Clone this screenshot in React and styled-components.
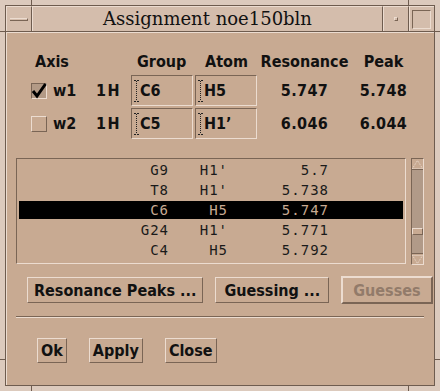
import React from "react";
import styled, { createGlobalStyle } from "styled-components";

const C = {
  frame: "#dccabd",
  line: "#6e5c4f",
  title: "#d4bdac",
  body: "#c8aa92",
  hi: "#ecdcd0",
  lo: "#7a6555",
  trough: "#b19a88",
  sunk: "#b39a86",
};

const Global = createGlobalStyle`
  html, body { margin: 0; padding: 0; background: ${C.frame}; }
  * { box-sizing: border-box; }
`;

const Window = styled.div`
  position: relative;
  width: 440px;
  height: 391px;
  padding: 5px;
  background: ${C.frame};
`;

const Tick = styled.span`
  position: absolute;
  background: ${C.line};
  width: ${(p) => (p.$h ? "5px" : "1px")};
  height: ${(p) => (p.$h ? "1px" : "5px")};
`;

const Inner = styled.div`
  height: 100%;
  border: 1px solid ${C.line};
  display: flex;
  flex-direction: column;
`;

const TitleBar = styled.div`
  display: flex;
  height: 26px;
  flex: none;
  border-bottom: 1px solid ${C.line};
  background: ${C.title};
`;

const TitleBtn = styled.div`
  width: ${(p) => (p.$last ? "25px" : "26px")};
  flex: none;
  border-top: 1px solid ${C.hi};
  border-left: 1px solid ${C.hi};
  border-right: ${(p) => (p.$last ? "none" : `1px solid ${C.line}`)};
  display: flex;
  align-items: center;
  justify-content: center;
`;

const TitleText = styled.div`
  flex: 1;
  border-top: 1px solid ${C.hi};
  border-left: 1px solid ${C.hi};
  border-right: 1px solid ${C.line};
  display: flex;
  align-items: center;
  justify-content: center;
  font: 18px/24px "DejaVu Serif", serif;
  color: #111;
`;

const MinBar = styled.div`
  width: 18px;
  height: 3px;
  border-top: 1px solid ${C.hi};
  border-bottom: 1px solid ${C.lo};
  border-right: 1px solid ${C.lo};
  margin-top: 1px;
`;

const Dot = styled.div`
  width: 4px;
  height: 4px;
  border-top: 1px solid ${C.hi};
  border-left: 1px solid ${C.hi};
  border-bottom: 1px solid ${C.lo};
  border-right: 1px solid ${C.lo};
`;

const MaxBox = styled.div`
  width: 19px;
  height: 19px;
  border-top: 1px solid ${C.lo};
  border-left: 1px solid ${C.lo};
  border-bottom: 1px solid ${C.hi};
  border-right: 1px solid ${C.hi};
  margin-left: -1px;
`;

const Body = styled.div`
  flex: 1;
  background: ${C.body};
  border-top: 1px solid ${C.hi};
  border-left: 1px solid ${C.hi};
  padding: 20px 9px 0 9px;
  display: flex;
  flex-direction: column;
  font-family: "DejaVu Sans Condensed", "DejaVu Sans", sans-serif;
  font-stretch: condensed;
  color: #111;
`;

const Grid = styled.div`
  display: grid;
  grid-template-columns: 22px 43px 35px 64px 62px 95px 63px;
  grid-template-rows: 20px 31px 31px;
  row-gap: 2px;
  margin-left: 15px;
  font-weight: bold;
  font-size: 16px;
  line-height: 20px;
  align-items: center;
`;

const Head = styled.div`
  grid-column: ${(p) => p.$span || "auto"};
  padding-left: ${(p) => p.$pad || 0}px;
  text-align: ${(p) => (p.$center ? "center" : "left")};
  margin-top: -1px;
  align-self: start;
`;

const Cell = styled.div`
  text-align: ${(p) => (p.$center ? "center" : "left")};
  letter-spacing: ${(p) => (p.$num ? "0.4px" : "0")};
  margin-top: 1px;
`;

const Check = styled.div`
  width: 16px;
  height: 16px;
  background: ${(p) => (p.$on ? C.sunk : C.body)};
  border-top: 1px solid ${(p) => (p.$on ? C.lo : C.hi)};
  border-left: 1px solid ${(p) => (p.$on ? C.lo : C.hi)};
  border-bottom: 1px solid ${(p) => (p.$on ? C.hi : C.lo)};
  border-right: 1px solid ${(p) => (p.$on ? C.hi : C.lo)};
  display: flex;
  align-items: center;
  justify-content: center;
  overflow: visible;
`;

const Entry = styled.div`
  width: 62px;
  height: 31px;
  border-top: 1px solid ${C.lo};
  border-left: 1px solid ${C.lo};
  border-bottom: 1px solid ${C.hi};
  border-right: 1px solid ${C.hi};
  display: flex;
  align-items: center;
  padding-left: 2px;
  gap: 1px;
`;

const ListArea = styled.div`
  display: flex;
  gap: 5px;
  margin-top: 19px;
`;

const ListBox = styled.div`
  width: 390px;
  height: 106px;
  border-top: 1px solid ${C.lo};
  border-left: 1px solid ${C.lo};
  border-bottom: 1px solid ${C.hi};
  border-right: 1px solid ${C.hi};
  padding: 2px;
`;

const ListRow = styled.div`
  display: grid;
  grid-template-columns: 150px 59px 101px 1fr;
  height: 18px;
  margin-bottom: 2px;
  background: ${(p) => (p.$sel ? "#000" : "transparent")};
  color: ${(p) => (p.$sel ? C.body : "#1a1a1a")};
  font: 14px/18px "DejaVu Sans Mono", monospace;
  letter-spacing: 1px;
  & > span {
    text-align: right;
  }
`;

const Scroll = styled.div`
  width: 13px;
  height: 107px;
  background: ${C.trough};
  border-top: 1px solid ${C.lo};
  border-left: 1px solid ${C.lo};
  border-bottom: 1px solid ${C.hi};
  border-right: 1px solid ${C.hi};
  display: flex;
  flex-direction: column;
`;

const Arrow = styled.div`
  height: 11px;
  flex: none;
  background: ${C.body};
  border-bottom: ${(p) => (p.$down ? "none" : `1px solid ${C.lo}`)};
  border-top: ${(p) => (p.$down ? `1px solid ${C.lo}` : "none")};
  display: flex;
  align-items: center;
  justify-content: center;
`;

const Thumb = styled.div`
  height: 7px;
  flex: none;
  margin-top: ${(p) => p.$top}px;
  background: ${C.body};
  border-top: 1px solid ${C.hi};
  border-left: 1px solid ${C.hi};
  border-bottom: 1px solid ${C.lo};
  border-right: 1px solid ${C.lo};
`;

const Spacer = styled.div`
  flex: 1;
`;

const ButtonRow = styled.div`
  display: flex;
  gap: ${(p) => p.$gap}px;
  margin-top: ${(p) => p.$top}px;
  padding-left: ${(p) => p.$left}px;
  align-items: center;
`;

const Button = styled.div`
  height: ${(p) => p.$h}px;
  padding: 0 ${(p) => p.$pad}px;
  display: flex;
  align-items: center;
  font-size: 16px;
  font-weight: bold;
  white-space: nowrap;
  color: ${(p) => (p.$disabled ? "#927b6a" : "#111")};
  border-top: ${(p) => p.$bw}px solid ${C.hi};
  border-left: ${(p) => p.$bw}px solid ${C.hi};
  border-bottom: ${(p) => p.$bw}px solid ${C.lo};
  border-right: ${(p) => p.$bw}px solid ${C.lo};
`;

const Separator = styled.div`
  margin-top: 12px;
  height: 2px;
  width: 408px;
  border-top: 1px solid ${C.lo};
  border-bottom: 1px solid ${C.hi};
`;

const IBeam = () => (
  <svg width="5" height="22" viewBox="0 0 5 22">
    <path d="M0 0.5h2M3 0.5h2M0 21.5h2M3 21.5h2" stroke="#222" strokeWidth="1" />
    <path d="M2.5 1v20" stroke="#222" strokeWidth="1" strokeDasharray="1 1" />
  </svg>
);

const Tri = ({ down }) => (
  <svg width="11" height="9" viewBox="0 0 11 9">
    <path
      d={down ? "M0.5 0.5h10L5.5 8.5z" : "M0.5 8.5h10L5.5 0.5z"}
      fill="none"
      stroke={C.hi}
      strokeWidth="1"
      strokeDasharray="1 1"
    />
  </svg>
);

const rows = [
  ["G9", "H1'", "5.7"],
  ["T8", "H1'", "5.738"],
  ["C6", "H5", "5.747"],
  ["G24", "H1'", "5.771"],
  ["C4", "H5", "5.792"],
];

const axes = [
  { on: true, w: "w1", g: "C6", a: "H5", r: "5.747", p: "5.748" },
  { on: false, w: "w2", g: "C5", a: "H1’", r: "6.046", p: "6.044" },
];

export default function App() {
  return (
    <Window>
      <Global />
      <Tick style={{ left: 31, top: 0 }} />
      <Tick style={{ left: 408, top: 0 }} />
      <Tick style={{ left: 31, bottom: 0 }} />
      <Tick style={{ left: 408, bottom: 0 }} />
      <Tick $h style={{ left: 0, top: 31 }} />
      <Tick $h style={{ right: 0, top: 31 }} />
      <Tick $h style={{ left: 0, top: 359 }} />
      <Tick $h style={{ right: 0, top: 359 }} />
      <Inner>
        <TitleBar>
          <TitleBtn>
            <MinBar />
          </TitleBtn>
          <TitleText>Assignment noe150bln</TitleText>
          <TitleBtn>
            <Dot />
          </TitleBtn>
          <TitleBtn $last>
            <MaxBox />
          </TitleBtn>
        </TitleBar>
        <Body>
          <Grid>
            <Head $span="span 2" $pad={4}>Axis</Head>
            <Head />
            <Head $pad={6}>Group</Head>
            <Head $pad={10}>Atom</Head>
            <Head $center>Resonance</Head>
            <Head $center>Peak</Head>
            {axes.map((x) => (
              <React.Fragment key={x.w}>
                <Check $on={x.on}>
                  {x.on && (
                    <svg width="14" height="14" viewBox="0 0 14 14" style={{ overflow: "visible" }}>
                      <path d="M1 7l4 5L13.5 0" fill="none" stroke="#000" strokeWidth="3" />
                    </svg>
                  )}
                </Check>
                <Cell>{x.w}</Cell>
                <Cell>1{"\u200A"}H</Cell>
                <Entry>
                  <IBeam />
                  {x.g}
                </Entry>
                <Entry>
                  <IBeam />
                  {x.a}
                </Entry>
                <Cell $center $num>{x.r}</Cell>
                <Cell $center $num>{x.p}</Cell>
              </React.Fragment>
            ))}
          </Grid>

          <ListArea>
            <ListBox>
              {rows.map((r, i) => (
                <ListRow key={r[0]} $sel={i === 2}>
                  <span>{r[0]}</span>
                  <span>{r[1]}</span>
                  <span>{r[2]}</span>
                </ListRow>
              ))}
            </ListBox>
            <Scroll>
              <Arrow>
                <Tri />
              </Arrow>
              <Thumb $top={58} />
              <Spacer />
              <Arrow $down>
                <Tri down />
              </Arrow>
            </Scroll>
          </ListArea>

          <ButtonRow $gap={12} $top={11} $left={11}>
            <Button $h={26} $pad={6} $bw={1}>Resonance Peaks ...</Button>
            <Button $h={26} $pad={8} $bw={1}>Guessing ...</Button>
            <Button $h={28} $pad={10} $bw={2} $disabled>Guesses</Button>
          </ButtonRow>
          <Separator />
          <ButtonRow $gap={22} $top={20} $left={21}>
            <Button $h={25} $pad={3} $bw={1}>Ok</Button>
            <Button $h={25} $pad={3} $bw={1}>Apply</Button>
            <Button $h={25} $pad={3} $bw={1}>Close</Button>
          </ButtonRow>
        </Body>
      </Inner>
    </Window>
  );
}
